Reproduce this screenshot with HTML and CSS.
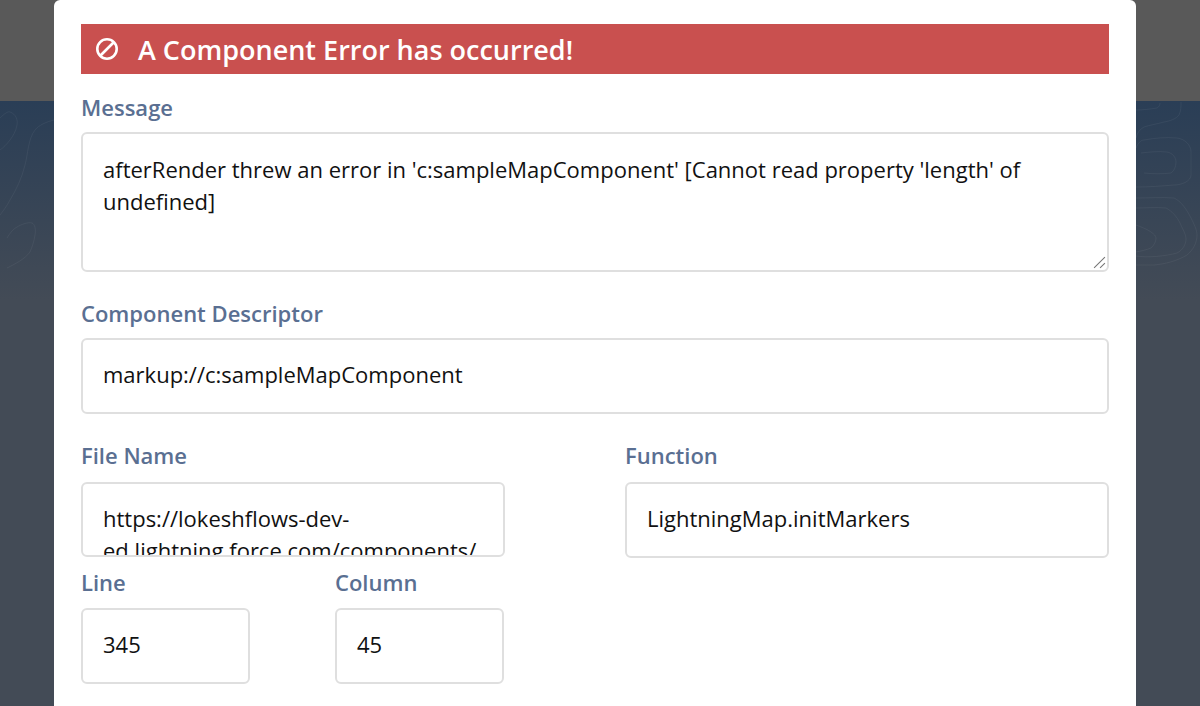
FILE: index.html
```html
<!DOCTYPE html>
<html lang="en">
<head>
  <meta charset="UTF-8"/>
  <title>Component Error</title>
  <link rel="stylesheet" href="styles.css">
</head>
<body>
  <div class="top-shade"></div>
  <svg class="contours" viewBox="0 0 1200 706" fill="none" stroke="#ffffff" stroke-opacity=".05">
    <path d="M0 118c4-4 8-7 10-6 6 2 8 8 7 13-1 6-4 11-7 15-3 4-7 8-10 10"/>
    <path d="M54 120c-8 2-15 5-19 10-7 9-7 24-10 35-3 13-9 25-15 35-3 6-7 11-10 15"/>
    <path d="M7 238c3-5 6-9 10-11 5-3 11-5 15-4 3 1 4 7 3 12-1 7-3 12-5 17-5 7-15 12-23 16"/>
    <path d="M1136 110c8 0 14-1 21-2 2-1 3-3 3-5"/>
    <path d="M1181 102c0 5 0 9-2 13-3 4-9 6-15 7-7 2-14 3-20 5-4 2-7 6-8 11"/>
    <path d="M1136 148c2-5 5-8 8-8 11-2 22-3 33-2 8 1 14 7 14 14v23c0 6-9 10-17 10-12 1-25 2-38 2"/>
    <path d="M1141 153c8-1 18-2 26-1 6 1 9 6 9 10 0 5-2 9-5 11-8 1-18 1-27 0"/>
    <path d="M1136 198c13 0 26-1 38 0 7 3 13 12 17 20 3 6 6 12 6 17 0 8-4 15-10 20-10 6-22 9-33 10-6 0-12 0-18 0"/>
    <path d="M1136 208c10 0 20-1 30 0 6 3 11 9 14 15 2 5 6 11 6 16 0 5-3 11-9 14-11 3-29 5-41 3"/>
    <path d="M1136 225c5 2 11 4 15 7 3 2 5 4 5 6 0 4-2 7-5 10-5 2-10 3-15 4"/>
  </svg>
  <div class="modal">
    <div class="error-banner">
      <svg class="ban-icon" viewBox="0 0 24 24" fill="none" stroke="#fff" stroke-width="2.6">
        <circle cx="12" cy="12" r="9.7"/>
        <path d="M5.5 18.5l13-13"/>
      </svg>
      <span>A Component Error has occurred!</span>
    </div>

    <div class="field">
      <label class="field-label">Message</label>
      <div class="box box-message">afterRender threw an error in 'c:sampleMapComponent' [Cannot read property 'length' of undefined]
        <svg class="grip" viewBox="0 0 12 12" fill="none" stroke="#777" stroke-width="1">
          <path d="M1 11L11 1M6.5 11L11 6.5"/>
        </svg>
      </div>
    </div>

    <div class="field field-descriptor">
      <label class="field-label">Component Descriptor</label>
      <div class="box box-single">markup://c:sampleMapComponent</div>
    </div>

    <div class="two-col">
      <div class="left-col">
        <div class="field">
          <label class="field-label">File Name</label>
          <div class="box box-file">https://lokeshflows-dev-ed.lightning.force.com/components/<wbr>c/sampleMapComponent.js</div>
        </div>
        <div class="line-col">
          <div class="field">
            <label class="field-label">Line</label>
            <div class="box box-single">345</div>
          </div>
          <div class="field">
            <label class="field-label">Column</label>
            <div class="box box-single">45</div>
          </div>
        </div>
      </div>
      <div class="field">
        <label class="field-label">Function</label>
        <div class="box box-single">LightningMap.initMarkers</div>
      </div>
    </div>
  </div>
</body>
</html>
```

FILE: styles.css
```css
html, body { margin:0; height:100%; overflow:hidden; }
body {
  font-family:"Open Sans","Noto Sans",Arial,sans-serif;
  background:linear-gradient(180deg,#2a3e56 101px,#434b56 300px);
  color:#111;
}
.top-shade { position:absolute; left:0; top:0; right:0; height:101px; background:#595959; }
.contours { position:absolute; left:0; top:0; width:1200px; height:706px; }
.modal {
  position:relative; box-sizing:border-box;
  width:1082px; height:706px; margin-left:54px;
  padding:24px 27px 0; background:#fff; border-radius:6px 6px 0 0;
}
.error-banner {
  display:flex; align-items:center; gap:19px; height:50px; padding-left:14px;
  background:#c9504f; color:#fff; font-size:27px; font-weight:600;
}
.ban-icon { width:24px; height:24px; flex:none; margin-top:-1px; }
.field { display:flex; flex-direction:column; }
.field-label { display:block; height:22px; line-height:22px; margin:22px 0 14px; font-size:22px; font-weight:600; color:#5a6f92; }
.box {
  position:relative; box-sizing:border-box; border:2px solid #dfdfdf; border-radius:6px; background:#fff;
  padding:0 20px; font-size:22px; line-height:32px; overflow:hidden;
}
.box-message { height:140px; padding-top:19px; }
.box-single { height:76px; padding-top:18px; }
.box-file { height:75px; padding-top:18px; }
.grip { position:absolute; right:1px; bottom:1px; width:13px; height:13px; }
.field-descriptor { margin-top:8px; }
.two-col { display:grid; grid-template-columns:424px 484px; column-gap:120px; margin-top:8px; }
.two-col > .field > .field-label, .left-col > .field > .field-label { margin-bottom:16px; }
.line-col { display:grid; grid-template-columns:169px 169px; column-gap:85px; }
.line-col .field-label { margin:14px 0 15px; }
```
